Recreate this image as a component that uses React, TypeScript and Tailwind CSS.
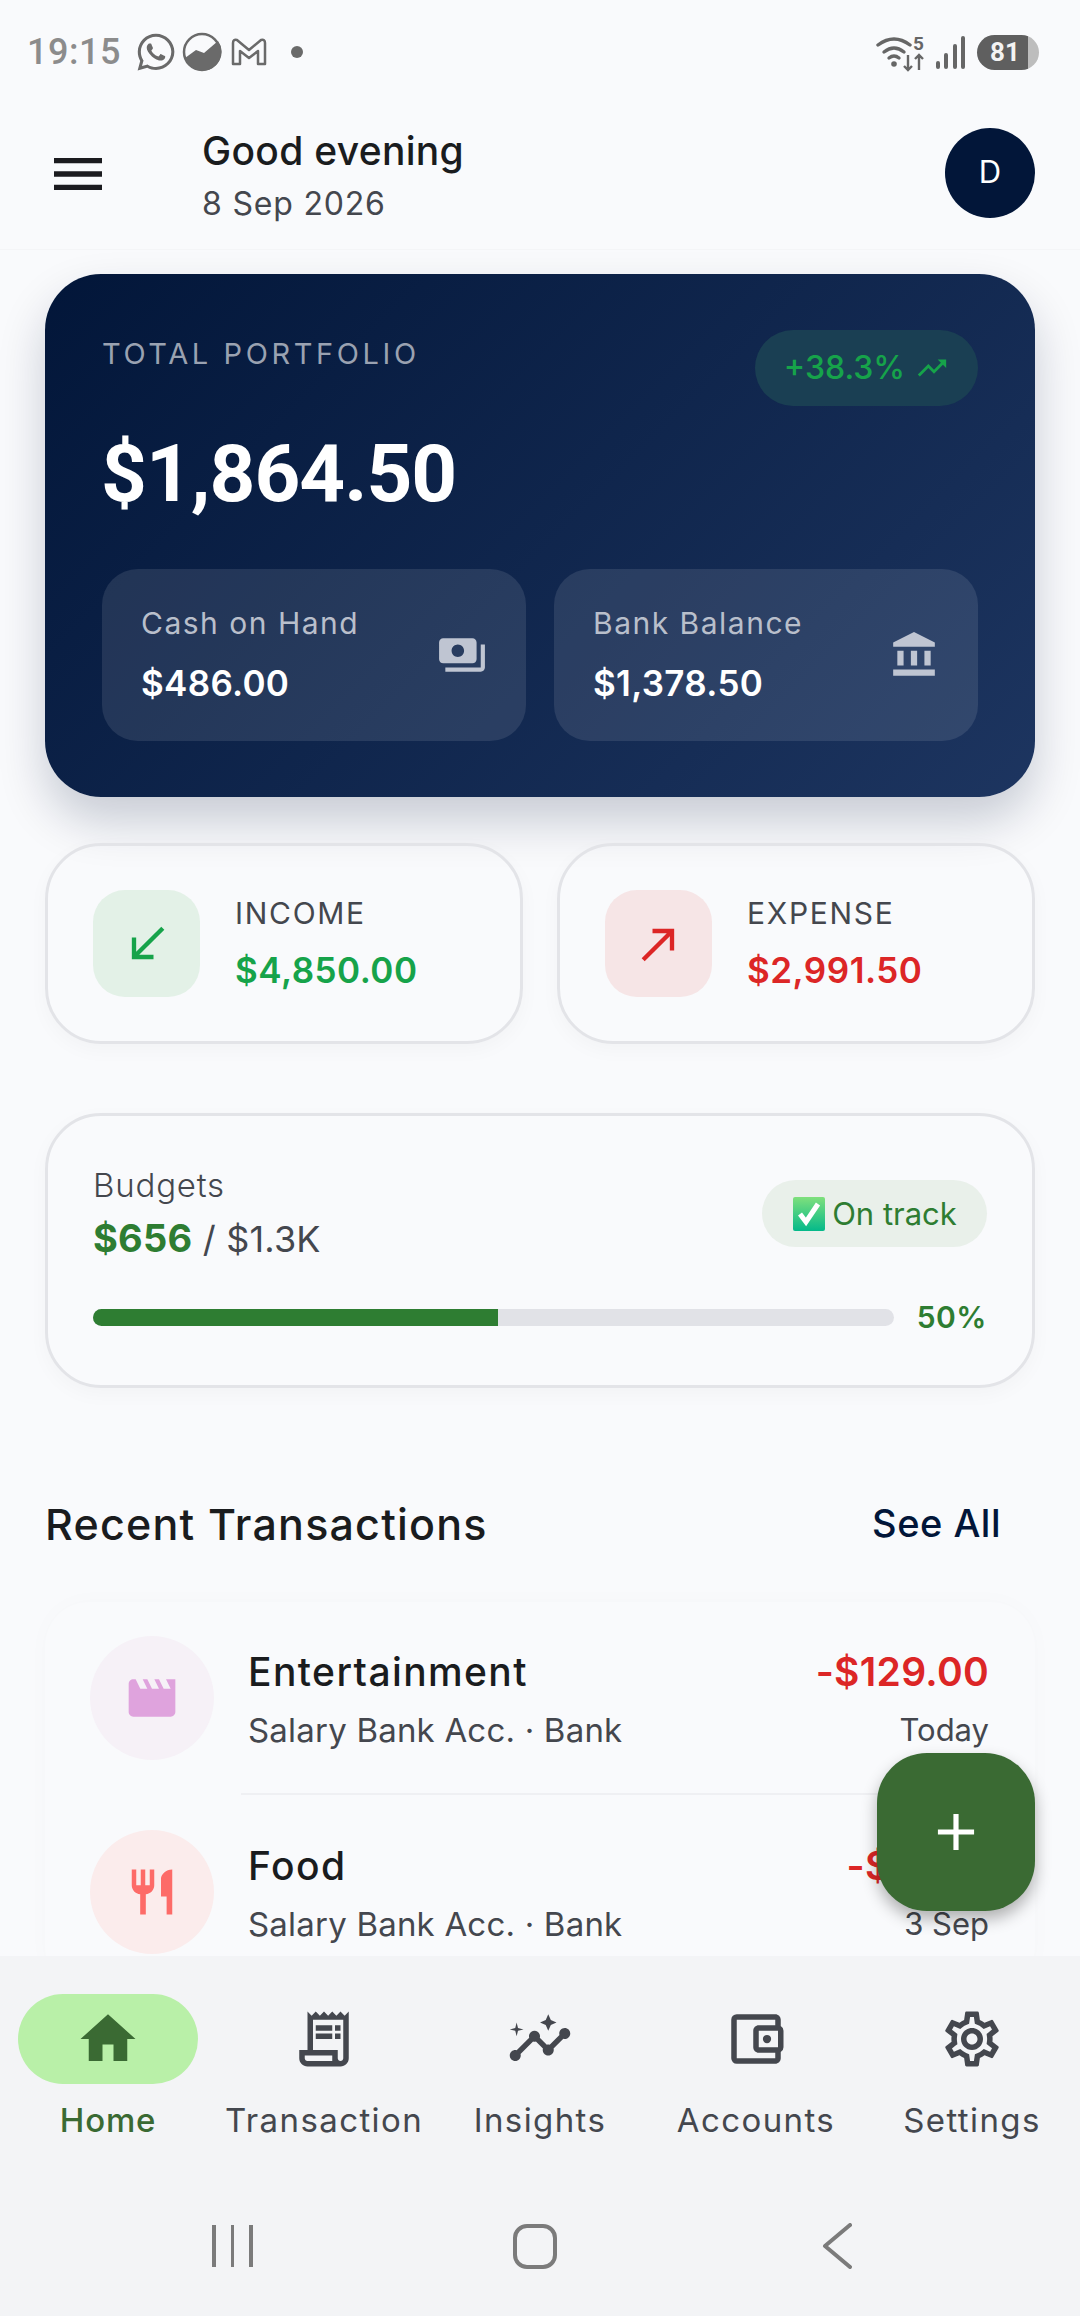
import React from "react";
import {
  MdMenu, MdTrendingUp, MdPayments, MdAccountBalance, MdCallReceived, MdCallMade, MdMovie, MdRestaurant,
  MdHome, MdOutlineReceiptLong, MdOutlineInsights, MdOutlineAccountBalanceWallet, MdOutlineSettings, MdAdd,
} from "react-icons/md";
import { FaWhatsapp } from "react-icons/fa";

function StatusBar() {
  return (
    <div className="h-[88px] pt-[16px] pl-[27px] pr-[41px] flex items-center justify-between shrink-0 text-[#6a6a6a]">
      <div className="flex items-center">
        <span className="font-[Roboto,sans-serif] font-medium text-[36px] leading-none text-[#8c8c8c] w-[108px] tracking-[0.5px]">19:15</span>
        <FaWhatsapp className="text-[42px]" />
        <svg viewBox="0 0 40 40" className="w-[40px] h-[40px] ml-[5px]">
          <circle cx="20" cy="20" r="18" fill="none" stroke="#6a6a6a" strokeWidth="2.5" />
          <path d="M3 26 L14 18 L22 21 L36 9 A18.5 18.5 0 0 1 20 38.5 A18.5 18.5 0 0 1 3 26 Z" fill="#6a6a6a" />
        </svg>
        <svg viewBox="0 0 36 30" className="w-[36px] h-[30px] ml-[9px]">
          <path d="M2 27 V6 Q2 2 6 3 L18 13 L30 3 Q34 2 34 6 V27 H27 V14 L18 21 L9 14 V27 Z" fill="none" stroke="#6a6a6a" strokeWidth="2.5" strokeLinejoin="round" />
        </svg>
        <span className="w-[12px] h-[12px] rounded-full bg-[#6a6a6a] ml-[24px]" />
      </div>
      <div className="flex items-center">
        <svg viewBox="0 -4 50 42" className="w-[50px] h-[42px]">
          <g fill="none" stroke="#666" strokeWidth="3.4" strokeLinecap="round">
            <path d="M2 10 Q18 -2 34 10" />
            <path d="M8 17 Q18 9 28 17" />
            <path d="M13 23 Q18 19 23 23" />
          </g>
          <circle cx="18" cy="29" r="2.8" fill="#666" />
          <text x="37" y="15" fontSize="19" fontWeight="700" fill="#666" fontFamily="Roboto, sans-serif">5</text>
          <path d="M32 20 V35 M28 31 L32 35 L36 31 M43 35 V20 M39 24 L43 20 L47 24" fill="none" stroke="#666" strokeWidth="2.4" />
        </svg>
        <div className="flex items-end gap-[4.5px] h-[34px] ml-[10px]">
          <span className="w-[4px] h-[8px] rounded-full bg-[#666]" />
          <span className="w-[4px] h-[16px] rounded-full bg-[#666]" />
          <span className="w-[4px] h-[25px] rounded-full bg-[#666]" />
          <span className="w-[4px] h-[33px] rounded-full bg-[#666]" />
        </div>
        <div className="ml-[12px] w-[62px] h-[35px] rounded-full bg-[linear-gradient(90deg,#5f5f5f_0,#5f5f5f_82%,#bdbdbd_82%,#bdbdbd_100%)] flex items-center justify-center pr-[6px]">
          <span className="font-[Roboto,sans-serif] font-bold text-[26px] leading-none text-[#f3f3f3]">81</span>
        </div>
      </div>
    </div>
  );
}

function Header() {
  return (
    <div className="h-[162px] shrink-0 pl-[53px] pr-[45px] flex items-center pt-[8px] border-b border-[#f4f5f7]">
      <MdMenu className="text-[64px] text-[#1b1b1f] ml-[-7px] mt-[2px]" />
      <div className="ml-[92px] flex-1 mt-[7px]">
        <div className="text-[39px] leading-[52px] font-medium text-[#1a1c1e] tracking-[0.3px]">Good evening</div>
        <div className="text-[32px] leading-[46px] text-[#44474e] mt-[4px] tracking-[0.8px]">8 Sep 2026</div>
      </div>
      <div className="w-[90px] h-[90px] rounded-full bg-[#021639] flex items-center justify-center text-white text-[31px] font-normal">D</div>
    </div>
  );
}

function Portfolio() {
  return (
    <div className="h-[523px] rounded-[56px] bg-[linear-gradient(135deg,#021639_0%,#1d3560_100%)] px-[57px] pt-[56px] shadow-[0_24px_48px_rgba(2,22,57,0.2)]">
      <div className="flex justify-between items-start h-[76px]">
        <div className="text-[29px] leading-[36px] mt-[6px] font-normal tracking-[3.6px] text-[#9aa2b1]">TOTAL PORTFOLIO</div>
        <div className="w-[223px] h-[76px] rounded-full bg-[#1a3f53] flex items-center justify-center gap-[10px] text-[#16a34a]">
          <span className="text-[32px] font-medium leading-none">+38.3%</span>
          <MdTrendingUp className="text-[34px]" />
        </div>
      </div>
      <div className="font-[Roboto,sans-serif] text-[80px] leading-[100px] font-bold text-white mt-[18px] ml-[-1px] tracking-[-1px]">$1,864.50</div>
      <div className="grid grid-cols-2 gap-[28px] mt-[45px]">
        {[
          { l: "Cash on Hand", v: "$486.00", I: MdPayments },
          { l: "Bank Balance", v: "$1,378.50", I: MdAccountBalance },
        ].map(({ l, v, I }) => (
          <div key={l} className="h-[172px] rounded-[36px] bg-white/10 pl-[39px] pr-[39px] flex items-center justify-between">
            <div className="mb-[2px]">
              <div className="text-[30px] leading-[40px] text-[#b9bfcb] tracking-[1.5px]">{l}</div>
              <div className="text-[35px] leading-[44px] font-semibold text-white mt-[18px] tracking-[0.3px]">{v}</div>
            </div>
            <I className="text-[50px] text-[#bfc5d2]" />
          </div>
        ))}
      </div>
    </div>
  );
}

function Stat({ label, value, color, bg, Icon }: { label: string; value: string; color: string; bg: string; Icon: React.ComponentType<{ className?: string; style?: React.CSSProperties }> }) {
  return (
    <div className="h-[201px] rounded-[56px] border-[3px] border-[#e3e4e8] shadow-[0_6px_20px_rgba(0,0,0,0.03)] pl-[45px] pt-[44px] flex items-start gap-[35px]">
      <div className="w-[107px] h-[107px] rounded-[32px] flex items-center justify-center" style={{ background: bg }}>
        <Icon className="text-[52px]" style={{ color }} />
      </div>
      <div className="pt-[3px]">
        <div className="text-[30px] leading-[40px] font-normal text-[#44474e] tracking-[1.7px]">{label}</div>
        <div className="text-[35px] leading-[46px] font-semibold mt-[14px] tracking-[0.5px]" style={{ color }}>{value}</div>
      </div>
    </div>
  );
}

function Budget() {
  return (
    <div className="h-[275px] mt-[69px] rounded-[56px] border-[3px] border-[#e3e4e8] shadow-[0_6px_20px_rgba(0,0,0,0.03)] pl-[45px] pr-[45px] pt-[47px]">
      <div className="flex justify-between items-start">
        <div>
          <div className="text-[33px] leading-[44px] text-[#44474e] tracking-[0.8px] font-light">Budgets</div>
          <div className="text-[36px] leading-[50px] mt-[6px] text-[#44474e] tracking-[0.2px]"><span className="font-bold text-[#2e7d32] text-[38px]">$656</span> / $1.3K</div>
        </div>
        <div className="w-[225px] h-[67px] rounded-full bg-[#e9f0ea] flex items-center justify-center gap-[6px] text-[#2e7d32] text-[31px] mt-[17px] pt-[1px]">
          <svg viewBox="0 0 34 34" className="w-[34px] h-[34px]">
            <defs><linearGradient id="ck" x1="0" y1="0" x2="0" y2="1"><stop offset="0" stopColor="#7fe07c" /><stop offset="1" stopColor="#04b98a" /></linearGradient></defs>
            <rect x="1" y="0" width="32" height="34" rx="2" fill="url(#ck)" />
            <path d="M8 17 L14 25 L26 7" fill="none" stroke="#fff" strokeWidth="5" />
          </svg>
          On track
        </div>
      </div>
      <div className="flex items-center justify-between mt-[38px]">
        <div className="w-[801px] h-[17px] rounded-full bg-[#e1e2e7] overflow-hidden">
          <div className="h-full bg-[#2e7d32]" style={{ width: "50.5%" }} />
        </div>
        <span className="text-[30px] font-semibold text-[#2e7d32] leading-none tracking-[0.5px]">50%</span>
      </div>
    </div>
  );
}

function Tx({ title, amount, date, bg, Icon, color, iconClass, divider }: { title: string; amount: string; date: string; bg: string; color: string; iconClass: string; Icon: React.ComponentType<{ className?: string; style?: React.CSSProperties }>; divider?: boolean }) {
  return (
    <div className="relative h-[194px] pl-[45px] pr-[46px] pt-[34px] flex items-start shrink-0">
      <div className="w-[124px] h-[124px] rounded-full flex items-center justify-center shrink-0" style={{ background: bg }}>
        <Icon className={iconClass} style={{ color }} />
      </div>
      <div className="ml-[34px] flex-1 pt-[11px]">
        <div className="text-[39px] leading-[50px] font-medium text-[#1a1c1e] tracking-[1.4px]">{title}</div>
        <div className="text-[33px] leading-[46px] text-[#44474e] mt-[10px] tracking-[0.2px]">Salary Bank Acc. · Bank</div>
      </div>
      <div className="text-right pt-[11px]">
        <div className="text-[39px] leading-[50px] font-semibold text-[#dc2626] tracking-[0.3px]">{amount}</div>
        <div className="text-[31px] leading-[46px] text-[#44474e] mt-[10px]">{date}</div>
      </div>
      {divider && <div className="absolute left-[196px] right-0 bottom-[1px] h-[2px] bg-[#eff0f3]" />}
    </div>
  );
}

function Nav() {
  const items = [
    { l: "Transaction", I: MdOutlineReceiptLong },
    { l: "Insights", I: MdOutlineInsights },
    { l: "Accounts", I: MdOutlineAccountBalanceWallet },
    { l: "Settings", I: MdOutlineSettings },
  ];
  return (
    <div className="h-[360px] shrink-0 bg-[#f3f4f6] relative z-10">
      <div className="grid grid-cols-5 pt-[38px]">
        <div className="flex flex-col items-center">
          <div className="w-[180px] h-[90px] rounded-full bg-[#b9f0a8] flex items-center justify-center">
            <MdHome className="text-[66px] text-[#3a6a33]" />
          </div>
          <div className="text-[33px] leading-[44px] mt-[14px] font-medium text-[#3a6a33] tracking-[0.8px]">Home</div>
        </div>
        {items.map(({ l, I }) => (
          <div key={l} className="flex flex-col items-center">
            <div className="w-[180px] h-[90px] flex items-center justify-center">
              <I className="text-[66px] text-[#44474e]" />
            </div>
            <div className="text-[33px] leading-[44px] mt-[14px] text-[#44474e] tracking-[1.4px]">{l}</div>
          </div>
        ))}
      </div>
      <div className="flex justify-between items-center pl-[212px] pr-[228px] mt-[81px]">
        <div className="flex gap-[15px]">
          <span className="w-[3.5px] h-[42px] bg-[#7b7b7b]" />
          <span className="w-[3.5px] h-[42px] bg-[#7b7b7b]" />
          <span className="w-[3.5px] h-[42px] bg-[#7b7b7b]" />
        </div>
        <div className="w-[44px] h-[45px] rounded-[14px] border-[4px] border-[#7b7b7b] ml-[-4px]" />
        <svg viewBox="0 0 30 46" className="w-[30px] h-[46px]">
          <path d="M28 2 L3 23 L28 44" fill="none" stroke="#7b7b7b" strokeWidth="4" strokeLinecap="round" strokeLinejoin="round" />
        </svg>
      </div>
    </div>
  );
}

export default function App() {
  return (
    <div className="relative w-[1080px] h-[2316px] overflow-hidden flex flex-col bg-[#f9fafc] font-[Inter,sans-serif]">
      <StatusBar />
      <Header />
      <div className="flex-1 min-h-0 overflow-hidden px-[45px] pt-[24px]">
        <Portfolio />
        <div className="grid grid-cols-2 gap-[34px] mt-[46px]">
          <Stat label="INCOME" value="$4,850.00" color="#16a34a" bg="#e3f1e7" Icon={MdCallReceived} />
          <Stat label="EXPENSE" value="$2,991.50" color="#dc2626" bg="#f6e5e6" Icon={MdCallMade} />
        </div>
        <Budget />
        <div className="flex justify-between items-center mt-[106px] pr-[34px]">
          <div className="text-[43px] leading-[60px] font-medium text-[#1a1c1e] tracking-[1.2px]">Recent Transactions</div>
          <div className="text-[38px] leading-[50px] font-medium text-[#021639] tracking-[0.5px] mb-[2px]">See All</div>
        </div>
        <div className="mt-[48px] rounded-[44px] shadow-[0_0_24px_rgba(0,0,0,0.02)] bg-[#f9fafc]">
          <Tx title="Entertainment" amount="-$129.00" date="Today" bg="#f6f1f7" color="#dfa3dd" iconClass="text-[56px]" Icon={MdMovie} divider />
          <Tx title="Food" amount="-$17.00" date="3 Sep" bg="#fbecec" color="#fd6b68" iconClass="text-[54px]" Icon={MdRestaurant} />
        </div>
      </div>
      <Nav />
      <div className="absolute left-[877px] top-[1753px] z-20 w-[158px] h-[158px] rounded-[50px] bg-[#3a6a33] flex items-center justify-center shadow-[0_8px_16px_rgba(0,0,0,0.3)]">
        <MdAdd className="text-[62px] text-white" />
      </div>
    </div>
  );
}
